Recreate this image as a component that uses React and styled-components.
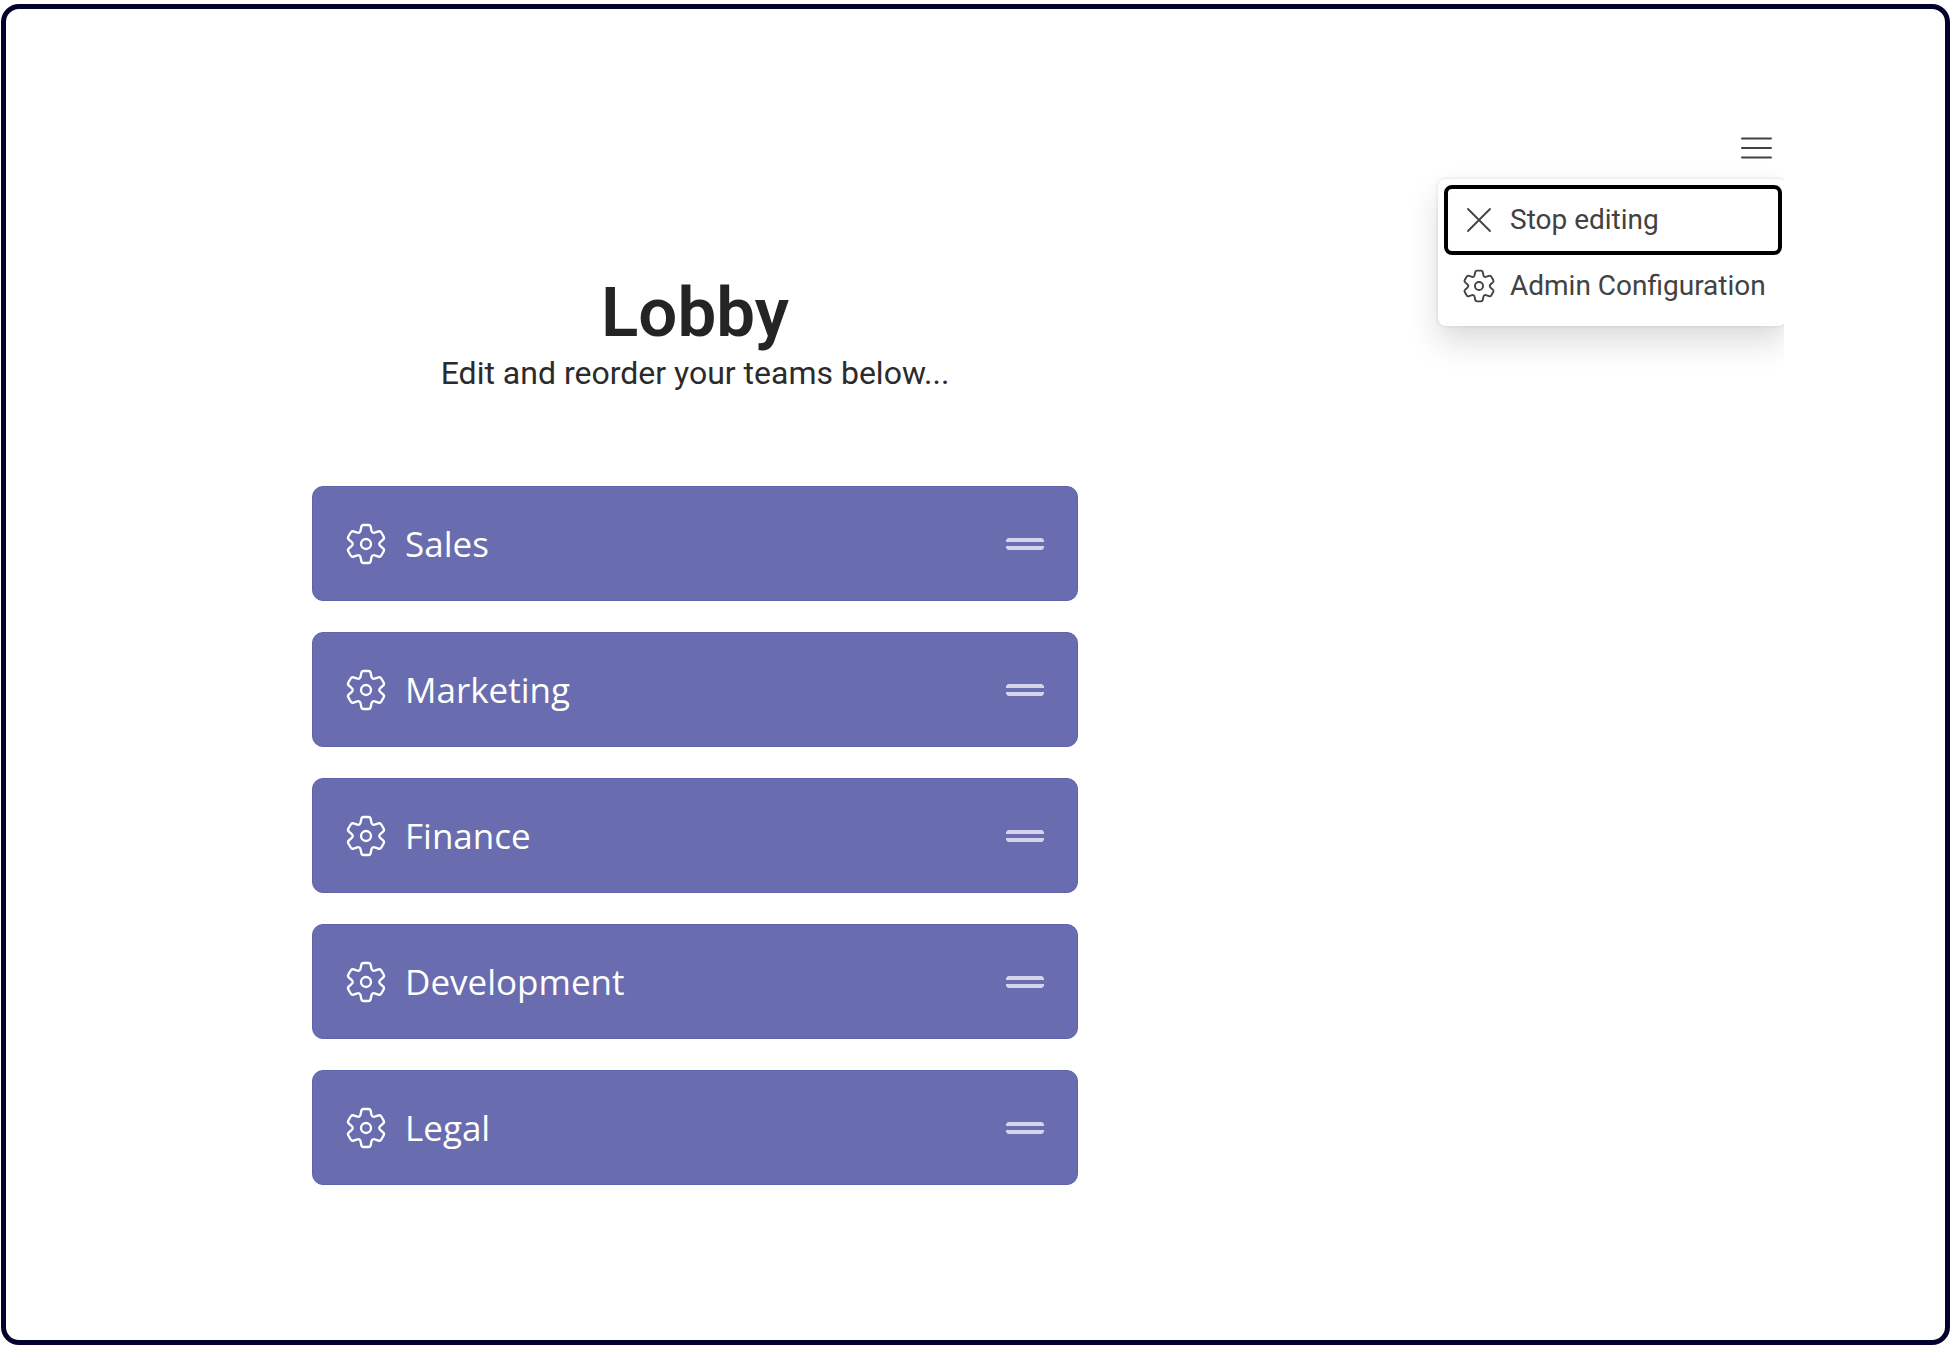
import React, { useState } from 'react';
import styled, { createGlobalStyle } from 'styled-components';

const GlobalStyle = createGlobalStyle`
  *, *::before, *::after {
    box-sizing: border-box;
  }

  body {
    margin: 0;
    background: #ffffff;
    font-family: Roboto, "Liberation Sans", sans-serif;
  }
`;

const Page = styled.div`
  min-height: 100vh;
  display: flex;
  padding: 4px 2px 2px 1px;
`;

const Frame = styled.div`
  flex-grow: 1;
  display: flex;
  border: 5px solid #02022c;
  border-radius: 18px;
  padding-right: 161px;
`;

const Stage = styled.div`
  flex-grow: 1;
  display: flex;
  justify-content: space-between;
  align-items: flex-start;
  gap: 24px;
  padding: 119px 0 80px 306px;
  overflow: hidden;
`;

const Lobby = styled.main`
  flex: 0 1 766px;
  padding-top: 145px;
`;

const Headline = styled.h1`
  margin: 0;
  color: #242424;
  font-size: 69px;
  font-weight: 600;
  line-height: 80px;
  text-align: center;
`;

const Hint = styled.p`
  margin: 0 0 93px;
  color: #2b2b2b;
  font-size: 32px;
  line-height: 40px;
  text-align: center;
`;

const TeamList = styled.ul`
  display: flex;
  flex-direction: column;
  gap: 31px;
  margin: 0;
  padding: 0;
  list-style: none;
`;

const TeamCard = styled.li`
  display: flex;
  align-items: center;
  height: 115px;
  padding: 0 33px 0 32px;
  border: 1px solid #6062ab;
  border-radius: 11px;
  background: #696cae;
  color: #ffffff;
`;

const TeamName = styled.span`
  flex-grow: 1;
  margin-left: 18px;
  font-family: "Open Sans", "Noto Sans", sans-serif;
  font-size: 35px;
  line-height: 48px;
`;

const IconButton = styled.button`
  display: flex;
  padding: 0;
  border: 0;
  background: none;
  color: inherit;
  cursor: ${({ $grab }) => ($grab ? 'grab' : 'pointer')};
`;

const MenuArea = styled.div`
  flex-shrink: 0;
  display: flex;
  flex-direction: column;
  align-items: flex-end;
  gap: 11px;
`;

const MenuToggle = styled(IconButton)`
  margin-right: 8px;
  color: #424242;
`;

const Menu = styled.div`
  display: flex;
  flex-direction: column;
  width: 348px;
  height: 147px;
  margin-right: -2px;
  padding: 6px 4px 6px 6px;
  border-radius: 8px;
  background: #ffffff;
  box-shadow: 0 0 4px rgba(0, 0, 0, 0.12), 0 16px 32px rgba(0, 0, 0, 0.14);
`;

const MenuItem = styled.button`
  display: flex;
  align-items: center;
  gap: 14px;
  height: ${({ $active }) => ($active ? '70px' : '61px')};
  padding: 0 0 0 14px;
  border: 4px solid ${({ $active }) => ($active ? '#000000' : 'transparent')};
  border-radius: 8px;
  background: none;
  color: #424242;
  font-family: inherit;
  font-size: 28px;
  line-height: 32px;
  text-align: left;
  white-space: nowrap;
  cursor: pointer;
`;

// a tooth pointing up; the outline repeats it six times
const TOOTH = [[-17, -36], [-13, -57], [13, -57], [17, -36]];

const gearPath = () => {
  const points = [];
  for (let i = 0; i < 6; i += 1) {
    const a = (i * Math.PI) / 3;
    TOOTH.forEach(([x, y]) => {
      points.push([
        x * Math.cos(a) - y * Math.sin(a),
        x * Math.sin(a) + y * Math.cos(a),
      ]);
    });
  }
  const towards = ([x1, y1], [x2, y2]) => {
    const t = Math.min(0.48, 6 / Math.hypot(x2 - x1, y2 - y1));
    return `${(x1 + (x2 - x1) * t).toFixed(2)} ${(y1 + (y2 - y1) * t).toFixed(2)}`;
  };
  return points
    .map((p, i) => {
      const prev = points[(i + points.length - 1) % points.length];
      const next = points[(i + 1) % points.length];
      return `${i ? 'L' : 'M'}${towards(p, prev)}Q${p[0].toFixed(2)} ${p[1].toFixed(2)} ${towards(p, next)}`;
    })
    .join('') + 'Z';
};

const GEAR = gearPath();

const GearIcon = ({ size }) => (
  <svg width={size} height={size} viewBox="-63 -63 126 126" fill="none" stroke="currentColor" strokeWidth="7" aria-hidden="true">
    <path d={GEAR} />
    <circle r="15" />
  </svg>
);

const CloseIcon = () => (
  <svg width="34" height="34" viewBox="0 0 34 34" stroke="currentColor" strokeWidth="1.8" strokeLinecap="round" aria-hidden="true">
    <path d="M6 6L28 28M28 6L6 28" />
  </svg>
);

const MenuIcon = () => (
  <svg width="40" height="40" viewBox="0 0 40 40" stroke="currentColor" strokeWidth="2" strokeLinecap="round" aria-hidden="true">
    <path d="M6 10.5H35M6 20H35M6 29.5H35" />
  </svg>
);

const HandleIcon = () => (
  <svg width="38" height="12" viewBox="0 0 38 12" fill="#d4d5ea" aria-hidden="true">
    <path d="M2 0H36L38 2V4H0V2ZM0 8H38V10L36 12H2L0 10Z" />
  </svg>
);

const teams = ['Sales', 'Marketing', 'Finance', 'Development', 'Legal'];

const Team = ({ name }) => (
  <TeamCard>
    <IconButton type="button" aria-label={`Configure ${name}`}>
      <GearIcon size={42} />
    </IconButton>
    <TeamName>{name}</TeamName>
    <IconButton type="button" $grab aria-label={`Reorder ${name}`}>
      <HandleIcon />
    </IconButton>
  </TeamCard>
);

export default function App() {
  const [open, setOpen] = useState(true);

  return (
    <>
      <GlobalStyle />
      <Page>
        <Frame>
          <Stage>
            <Lobby>
              <Headline>Lobby</Headline>
              <Hint>Edit and reorder your teams below...</Hint>
              <TeamList>
                {teams.map(name => (
                  <Team key={name} name={name} />
                ))}
              </TeamList>
            </Lobby>
            <MenuArea>
              <MenuToggle type="button" aria-label="Menu" aria-expanded={open} onClick={() => setOpen(!open)}>
                <MenuIcon />
              </MenuToggle>
              {open && (
                <Menu>
                  <MenuItem type="button" $active>
                    <CloseIcon />
                    Stop editing
                  </MenuItem>
                  <MenuItem type="button">
                    <GearIcon size={34} />
                    Admin Configuration
                  </MenuItem>
                </Menu>
              )}
            </MenuArea>
          </Stage>
        </Frame>
      </Page>
    </>
  );
}
